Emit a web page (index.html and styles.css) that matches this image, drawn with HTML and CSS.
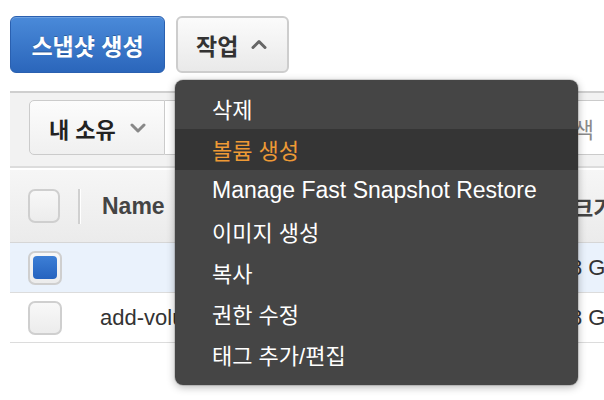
FILE: index.html
```html
<!DOCTYPE html>
<html lang="ko">
<head>
<meta charset="utf-8">
<link rel="stylesheet" href="styles.css">
</head>
<body>
<div class="topbar">
  <button class="btn btn-primary">스냅샷 생성</button>
  <div class="action-wrap">
    <button class="btn btn-default">작업
      <svg class="chev" width="16" height="10" viewBox="0 0 16 10"><polyline points="2,8.5 8,2.5 14,8.5" fill="none" stroke="#666" stroke-width="3" stroke-linejoin="round" stroke-linecap="round"/></svg>
    </button>
    <ul class="menu">
      <li class="item ko">삭제</li>
      <li class="item ko active">볼륨 생성</li>
      <li class="item">Manage Fast Snapshot Restore</li>
      <li class="item ko">이미지 생성</li>
      <li class="item ko">복사</li>
      <li class="item ko">권한 수정</li>
      <li class="item ko">태그 추가/편집</li>
    </ul>
  </div>
</div>

<div class="panel">
  <div class="toolbar">
    <div class="select">내 소유
      <svg class="chev-down" width="16" height="10" viewBox="0 0 16 10"><polyline points="2,2 8,8 14,2" fill="none" stroke="#888" stroke-width="3" stroke-linejoin="round" stroke-linecap="round"/></svg>
    </div>
    <div class="search">태그 및 속성으로 필터링 또는 키워드로 검색</div>
  </div>

  <div class="table">
    <div class="row head">
      <div class="cell check"><span class="box"></span><span class="divider"></span></div>
      <div class="cell name">Name</div>
      <div class="cell size">크기</div>
    </div>
    <div class="row selected">
      <div class="cell check"><span class="box"><span class="tick"></span></span></div>
      <div class="cell name"></div>
      <div class="cell size">8 GiB</div>
    </div>
    <div class="row">
      <div class="cell check"><span class="box"></span></div>
      <div class="cell name">add-volume-snapshot</div>
      <div class="cell size">8 GiB</div>
    </div>
  </div>
</div>
</body>
</html>
```

FILE: styles.css
```css
html, body {
  margin: 0;
  padding: 0;
  background: #fff;
  font-family: "Liberation Sans", "Noto Sans CJK KR", sans-serif;
  overflow: hidden;
  width: 604px;
  height: 400px;
}

.topbar {
  display: flex;
  gap: 11px;
  padding: 16px 0 0 10px;
  height: 57px;
}

.btn {
  height: 57px;
  border-radius: 6px;
  font-family: "Liberation Sans", "Noto Sans CJK KR", sans-serif;
  font-weight: bold;
  font-size: 23px;
  display: flex;
  align-items: center;
  box-sizing: border-box;
  cursor: pointer;
}

.btn-primary {
  width: 155px;
  justify-content: center;
  color: #fff;
  background: linear-gradient(#4a8ad9, #2b66bb);
  border: 1px solid #2a60b0;
  text-shadow: 0 -1px 0 rgba(0,0,0,0.25);
  box-shadow: inset 0 1px 0 rgba(255,255,255,0.2);
}

.action-wrap {
  position: relative;
}

.btn-default {
  width: 113px;
  padding: 0 0 0 18px;
  color: #333;
  background: linear-gradient(#fbfbfb, #e9e9e9);
  border: 2px solid #cdcdcd;
}

.chev {
  margin-left: 13px;
  margin-top: -2px;
}

.menu {
  position: absolute;
  top: 64px;
  left: -1px;
  width: 403px;
  margin: 0;
  padding: 8px 0 10px;
  list-style: none;
  background: #454545;
  border-radius: 8px;
  box-shadow: 0 0 0 1px rgba(0,0,0,0.12), 0 2px 8px rgba(0,0,0,0.3);
  z-index: 10;
}

.item {
  height: 41px;
  display: flex;
  align-items: center;
  padding-left: 37px;
  color: #fff;
  font-size: 23px;
  white-space: nowrap;
}

.item.ko {
  font-size: 22px;
  padding-bottom: 2px;
  box-sizing: border-box;
}

.item.active {
  background: #353535;
  color: #ee9a35;
}

.panel {
  margin: 18px 0 0 10px;
  width: 620px;
}

.toolbar {
  display: flex;
  background: #f2f2f2;
  border-top: 2px solid #cfcfcf;
  border-bottom: 2px solid #dcdcdc;
  padding: 7px 0 11px 19px;
}

.select {
  width: 136px;
  height: 55px;
  box-sizing: border-box;
  border: 1px solid #cbcbcb;
  border-radius: 5px 0 0 5px;
  background: linear-gradient(#fcfcfc, #f0f0f0);
  display: flex;
  align-items: center;
  padding-left: 19px;
  font-size: 22px;
  font-weight: bold;
  color: #222;
}

.chev-down {
  margin-left: 14px;
}

.search {
  flex: 1;
  height: 55px;
  box-sizing: border-box;
  border: 1px solid #cbcbcb;
  border-left: none;
  background: #fff;
  display: flex;
  align-items: center;
  padding-left: 28px;
  font-size: 22px;
  color: #8a8a8a;
  white-space: nowrap;
  overflow: hidden;
}

.table {
  margin-top: 2px;
}

.row {
  display: flex;
  align-items: center;
  height: 49px;
  border-bottom: 1px solid #dcdcdc;
  font-size: 22px;
  color: #333;
}

.row.head {
  height: 72px;
  background: linear-gradient(#f6f6f6, #ebebeb);
  border-bottom: 1px solid #d6d6d6;
  font-weight: bold;
  color: #444;
  font-size: 23px;
}

.row.selected {
  background: #eaf2fc;
}

.cell.check {
  width: 70px;
  box-sizing: border-box;
  padding-left: 18px;
  display: flex;
  align-items: center;
}

.box {
  width: 34px;
  height: 34px;
  box-sizing: border-box;
  border: 2px solid #cfcfcf;
  border-radius: 7px;
  background: linear-gradient(#f8f8f8, #ececec);
  display: flex;
  align-items: center;
  justify-content: center;
}

.tick {
  width: 24px;
  height: 23px;
  border-radius: 4px;
  background: linear-gradient(#3d7fd6, #2563bf);
}

.divider {
  width: 2px;
  height: 35px;
  margin-left: 18px;
  background: #d0d0d0;
  box-shadow: 1px 0 0 #fff;
}

.cell.name {
  width: 490px;
  box-sizing: border-box;
  padding-left: 22px;
  white-space: nowrap;
  overflow: hidden;
}

.row:not(.head) .cell.name {
  padding-left: 20px;
}

.cell.size {
  white-space: nowrap;
}

.row.head .cell.size {
  font-size: 22px;
  margin-left: 3px;
}
```
